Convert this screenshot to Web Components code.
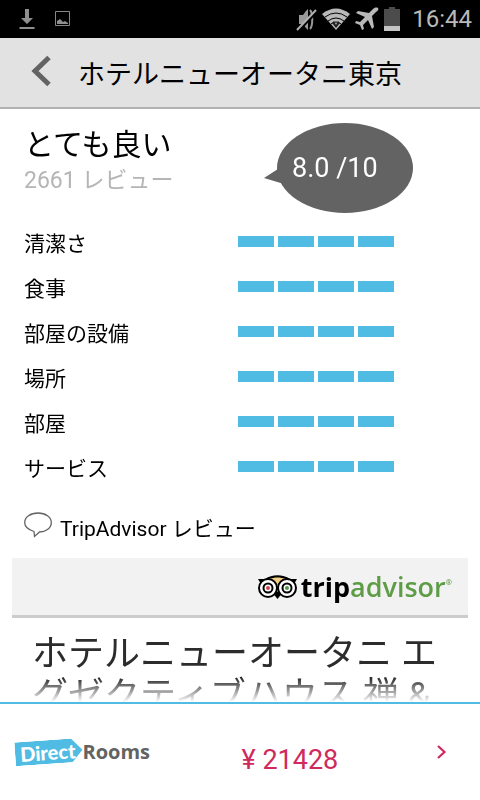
<!DOCTYPE html>
<html lang="ja">
<head>
<meta charset="utf-8">
<meta name="viewport" content="width=device-width, initial-scale=1">
<title>ホテルニューオータニ東京</title>
<style>
:root {
    --azul: #50bce3;
    --cinza: #636363;
    --rosa: #cf2a5d;
}
body {
    margin: 0;
    background: #fff;
    color: #000;
    font-family: Roboto, "Noto Sans CJK JP", sans-serif;
}
</style>
</head>
<body>
<app-screen>
    <status-bar slot="top">16:44</status-bar>
    <page-header slot="top">ホテルニューオータニ東京</page-header>
    <rating-summary>
        <span slot="verdict">とても良い</span>
        <span slot="count">2661 レビュー</span>
        <score-bubble slot="score">8.0 /10</score-bubble>
    </rating-summary>
    <rating-row value="4">清潔さ</rating-row>
    <rating-row value="4">食事</rating-row>
    <rating-row value="4">部屋の設備</rating-row>
    <rating-row value="4">場所</rating-row>
    <rating-row value="4">部屋</rating-row>
    <rating-row value="4">サービス</rating-row>
    <review-title>TripAdvisor レビュー</review-title>
    <review-card>ホテルニューオータニ エグゼクティブハウス 禅 &amp;</review-card>
    <booking-bar slot="bottom">¥ 21428</booking-bar>
</app-screen>

<script>
function define(name, html, setup) {
    const template = document.createElement('template');
    template.innerHTML = html;

    customElements.define(name, class extends HTMLElement {
        constructor() {
            super();
            this.attachShadow({ mode: 'open' });
            this.shadowRoot.appendChild(template.content.cloneNode(true));
        }

        connectedCallback() {
            if (setup) setup(this);
        }
    });
}

define('app-screen', `
<style>
:host {
    display: flex;
    flex-direction: column;
    height: 100vh;
}
main {
    flex: 1;
    min-height: 0;
    overflow-y: auto;
    scrollbar-width: none;
    -webkit-mask-image: linear-gradient(#000 calc(100% - 24px), transparent);
    mask-image: linear-gradient(#000 calc(100% - 24px), transparent);
}
</style>
<slot name="top"></slot>
<main><slot></slot></main>
<slot name="bottom"></slot>
`);

define('status-bar', `
<style>
:host {
    display: flex;
    align-items: center;
    height: 38px;
    padding: 0 8px 0 18px;
    background: #000;
    color: #b9b9b9;
    font-size: 24px;
}
.left, .right {
    display: flex;
    align-items: center;
}
.left {
    flex: 1;
    gap: 18px;
}
.right {
    gap: 4px;
}
time {
    margin-left: 8px;
}
</style>
<div class="left">
    <svg width="18" height="22" viewBox="0 0 18 22" fill="#8f8f8f">
        <path d="M7 1h4v9h4l-6 6-6-6h4zM1.5 19h15v2h-15z"/>
    </svg>
    <svg width="18" height="18" viewBox="0 0 18 18">
        <path d="M1.5 1.5h14v14h-14z" fill="none" stroke="#888" stroke-width="1"/>
        <path d="M3 14v-3l3-2 2 2 1 1 2-1 3 2v1z" fill="#8f8f8f"/>
    </svg>
</div>
<div class="right">
    <svg width="24" height="26" viewBox="0 0 24 26">
        <path d="M5 9h4l3-4 2-2v21l-2-2-3-4H5z" fill="#999"/>
        <path d="M16 4c3 3 3 16 0 19" fill="none" stroke="#999" stroke-width="2"/>
        <path d="M4 25 23 5" stroke="#000" stroke-width="3"/>
        <path d="M3 24 22 4" stroke="#b0b0b0" stroke-width="2"/>
    </svg>
    <svg width="28" height="24" viewBox="0 0 28 24">
        <path d="M0 7Q14-4 28 7L14 23z" fill="#b9b9b9"/>
        <path d="M3 10Q14 2 25 10M6 14Q14 8 22 14M9 17Q14 13 19 17" fill="none" stroke="#000" stroke-width="1"/>
        <path d="m12 14-2 2 4 5 4-5-2-2-2 4z" fill="#222"/>
    </svg>
    <svg width="26" height="24" viewBox="0 0 26 24" fill="#b9b9b9">
        <path d="M24 1c-2-1-4 0-5 1l-4 4L4 4 2 6l9 4-5 5-4-1-1 2 5 2 2 5 2-1-1-4 5-5 4 9 2-2-2-11 4-4c2-1 3-3 2-4z"/>
    </svg>
    <svg width="16" height="24" viewBox="0 0 16 24">
        <path d="M5 0h6v2h5v22H0V2h5z" fill="#4c4c4c"/>
        <path d="M0 19h16v5H0z" fill="#c4c4c4"/>
    </svg>
    <time><slot></slot></time>
</div>
`);

define('page-header', `
<style>
:host {
    display: flex;
    align-items: center;
    height: 69px;
    padding: 0 24px;
    gap: 20px;
    background: #e2e2e2;
    border-bottom: 2px solid #b2b2b2;
}
button {
    display: flex;
    padding: 0 6px 4px;
    border: 0;
    background: none;
    cursor: pointer;
}
h1 {
    margin: 0;
    padding-top: 4px;
    font-size: 27px;
    font-weight: 400;
    line-height: 36px;
}
</style>
<button type="button" aria-label="戻る">
    <svg width="22" height="32" viewBox="0 0 22 32">
        <path d="M19 2.5 5 16l14 13.5" fill="none" stroke="#636363" stroke-width="5"/>
    </svg>
</button>
<h1><slot></slot></h1>
`);

define('rating-summary', `
<style>
:host {
    display: grid;
    grid-template-columns: 1fr 1fr;
    padding: 14px 28px 6px 24px;
}
.texts {
    padding-top: 4px;
}
.verdict {
    display: block;
    font-size: 30px;
    line-height: 36px;
}
.count {
    display: block;
    font-size: 23px;
    line-height: 36px;
    color: #b5b5b5;
}
.score {
    padding-left: 26px;
}
</style>
<div class="texts">
    <slot name="verdict" class="verdict"></slot>
    <slot name="count" class="count"></slot>
</div>
<div class="score"><slot name="score"></slot></div>
`);

define('score-bubble', `
<style>
:host {
    display: grid;
    width: 149px;
    color: #fff;
    font-size: 27px;
}
svg, span {
    grid-area: 1 / 1;
}
span {
    align-self: center;
    padding-left: 28px;
}
</style>
<svg width="149" height="90" viewBox="0 0 149 90" fill="#636363">
    <ellipse cx="81" cy="45" rx="68" ry="45"/>
    <path d="M0 55 14 46l6 15z"/>
</svg>
<span><slot></slot></span>
`);

define('rating-row', `
<style>
:host {
    display: grid;
    grid-template-columns: 1fr 1fr;
    align-items: center;
    height: 45px;
    padding: 0 28px 0 24px;
    font-size: 21px;
}
.bars {
    display: flex;
    gap: 4px;
}
.bars i {
    width: 36px;
    height: 11px;
    background: var(--azul);
}
</style>
<span><slot></slot></span>
<div class="bars"></div>
`, function(row) {
    const bars = row.shadowRoot.querySelector('.bars');
    const value = Number(row.getAttribute('value'));
    bars.textContent = '';
    for (let i = 0; i < value; i++) {
        bars.appendChild(document.createElement('i'));
    }
});

define('review-title', `
<style>
:host {
    display: flex;
    align-items: center;
    gap: 8px;
    height: 63px;
    padding: 6px 24px 0;
}
h2 {
    margin: 0;
    font-size: 21px;
    font-weight: 400;
}
svg {
    padding-bottom: 3px;
}
</style>
<svg width="28" height="26" viewBox="0 0 28 26">
    <path d="M10 19.5C5 18 .7 15.5.7 10.5.7 5 6.5 1 14 1s13.3 4 13.3 9.5S22 20 15.5 20L10.5 24.5z" fill="#fff" stroke="#636363" stroke-width="1.3"/>
</svg>
<h2><slot></slot></h2>
`);

define('review-card', `
<style>
:host {
    display: block;
    margin: 0 12px;
}
.brand {
    display: flex;
    align-items: center;
    justify-content: flex-end;
    height: 57px;
    padding-right: 16px;
    background: #f2f2f2;
    border-bottom: 3px solid #ccc;
}
.name {
    margin-left: 4px;
    font: 700 27px/36px "Open Sans", sans-serif;
}
.name b {
    color: #5f9c47;
    font-weight: 600;
}
sup {
    align-self: flex-start;
    margin-top: 21px;
    color: #5f9c47;
    font-size: 8px;
    line-height: 8px;
}
h3 {
    margin: 0;
    padding: 15px 20px 24px;
    color: #2c2c2c;
    font-size: 36px;
    font-weight: 400;
    line-height: 42px;
}
</style>
<div class="brand">
    <svg width="39" height="25" viewBox="0 0 39 25">
        <path d="M0 5h7C14 0 25 0 32 5h7l-3 5H3z" fill="#000"/>
        <path d="M11 5c6-2 11-2 17 0-5 1-8 4-8.5 8C19 9 16 6 11 5z" fill="#f3cf85"/>
        <path d="m14 18 5.500 7 5.500-7z" fill="#000"/>
        <g fill="#fff" stroke="#000" stroke-width="2">
            <circle cx="10" cy="14" r="9"/>
            <circle cx="29" cy="14" r="9"/>
            <circle cx="10" cy="14" r="4.5"/>
            <circle cx="29" cy="14" r="4.5"/>
        </g>
        <circle cx="10" cy="14" r="2" fill="#d0454f"/>
        <circle cx="29" cy="14" r="2" fill="#4f9a45"/>
    </svg>
    <span class="name">trip<b>advisor</b></span><sup>®</sup>
</div>
<h3><slot></slot></h3>
`);

define('booking-bar', `
<style>
:host {
    display: block;
    border-top: 2px solid var(--azul);
    background: #fff;
}
a {
    display: grid;
    grid-template-columns: 1fr 1fr auto;
    align-items: center;
    height: 96px;
    padding: 0 32px 0 15px;
    color: var(--rosa);
    text-decoration: none;
}
.logo {
    display: flex;
    align-items: center;
    font: 700 20px/24px "Open Sans", sans-serif;
    color: var(--cinza);
}
.tag {
    padding: 0 7px 0 5px;
    background: var(--azul);
    clip-path: polygon(0 0, 84% 0, 100% 50%, 84% 100%, 0 100%);
    color: #fff;
    font: 900 20px/24px Lato, sans-serif;
    transform: rotate(-4deg);
}
.price {
    padding: 16px 0 0 16px;
    font-size: 27px;
    line-height: 32px;
}
</style>
<a href="#">
    <span class="logo"><span class="tag">Direct</span>Rooms</span>
    <span class="price"><slot></slot></span>
    <svg width="12" height="16" viewBox="0 0 12 16">
        <path d="m2 2 6.5 6L2 14" fill="none" stroke="#cf2a5d" stroke-width="2.2"/>
    </svg>
</a>
`);
</script>
</body>
</html>
